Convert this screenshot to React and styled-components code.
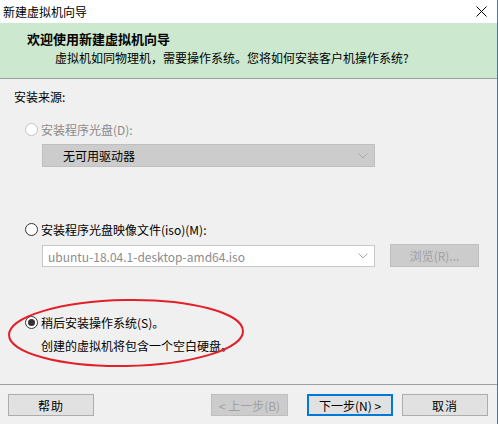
import React from 'react';
import styled, { createGlobalStyle } from 'styled-components';

const GlobalStyle = createGlobalStyle`
  html, body {
    margin: 0;
    padding: 0;
    background: #f0f0f0;
  }
  * {
    box-sizing: border-box;
  }
`;

const Window = styled.div`
  position: relative;
  width: 498px;
  height: 424px;
  display: flex;
  flex-direction: column;
  background: #f0f0f0;
  border-right: 1px solid #2b79d0;
  font-family: "Noto Sans CJK SC", "Microsoft YaHei", sans-serif;
  font-size: 12px;
  color: #000;
  overflow: hidden;
`;

const TitleBar = styled.div`
  height: 23px;
  display: flex;
  align-items: center;
  justify-content: space-between;
  padding: 0 10px 1px 3px;
  background: #fff;
  font-size: 12px;
`;

const Header = styled.div`
  height: 56px;
  background: #cce8cf;
  border-bottom: 1px solid #a0a0a0;
  padding-top: 8px;
`;

const HeaderTitle = styled.div`
  margin-left: 27px;
  font-size: 13px;
  font-weight: bold;
  line-height: 16px;
`;

const HeaderSub = styled.div`
  margin-left: 55px;
  margin-top: 3px;
  line-height: 16px;
`;

const Body = styled.div`
  flex: 1;
  padding: 10px 0 0 14px;
  display: flex;
  flex-direction: column;
`;

const Label = styled.div`
  line-height: 16px;
  margin-top: ${p => p.$top || 0}px;
  margin-left: ${p => p.$left || 0}px;
  color: ${p => (p.$disabled ? '#8a8a8a' : '#000')};
`;

const RadioRow = styled.div`
  display: flex;
  align-items: center;
  gap: 3px;
  height: 16px;
  margin-left: 11px;
  margin-top: ${p => p.$top}px;
  color: ${p => (p.$disabled ? '#8a8a8a' : '#000')};
`;

const RadioDot = styled.span`
  position: relative;
  width: 13px;
  height: 13px;
  border-radius: 50%;
  border: 1px solid ${p => (p.$disabled ? '#c2c2c2' : '#333')};
  background: #fff;

  &::after {
    content: '';
    display: ${p => (p.$checked ? 'block' : 'none')};
    position: absolute;
    left: 2px;
    top: 2px;
    width: 7px;
    height: 7px;
    border-radius: 50%;
    background: #333;
  }
`;

const FieldRow = styled.div`
  display: flex;
  align-items: flex-start;
  gap: 15px;
  margin-left: 28px;
  margin-top: 7px;
`;

const Combo = styled.div`
  width: 333px;
  height: ${p => (p.$disabled ? 23 : 22)}px;
  display: flex;
  align-items: center;
  justify-content: space-between;
  padding: 0 6px 0 ${p => (p.$disabled ? 20 : 5)}px;
  background: ${p => (p.$disabled ? '#cccccc' : '#fff')};
  border: 1px solid ${p => (p.$disabled ? '#bfbfbf' : '#c8c8c8')};
  color: ${p => (p.$disabled ? '#000' : '#8c8c8c')};
  margin-top: ${p => (p.$disabled ? 0 : 1)}px;
`;

const Button = styled.div`
  width: ${p => p.$w || 86}px;
  height: ${p => p.$h || 22}px;
  display: flex;
  align-items: center;
  justify-content: center;
  background: ${p => (p.$disabled ? '#cccccc' : '#e1e1e1')};
  border: ${p => (p.$primary ? '2px solid #0078d7' : p.$disabled ? '1px solid #bfbfbf' : '1px solid #adadad')};
  color: ${p => (p.$disabled ? '#a0a0a0' : '#000')};
  letter-spacing: ${p => p.$spacing || 0}px;
`;

const LaterSection = styled.div`
  display: flex;
  flex-direction: column;
`;

const Footer = styled.div`
  height: 40px;
  border-top: 1px solid #a0a0a0;
  padding: 9px 9px 8px 8px;
  display: flex;
  align-items: flex-start;
`;

const Spacer = styled.div`
  flex: 1;
`;

const FooterGroup = styled.div`
  display: flex;
  gap: ${p => p.$gap}px;
`;

const Ellipse = styled.svg`
  position: absolute;
  left: 7px;
  top: 298px;
  pointer-events: none;
`;

const Chevron = ({ color }) => (
  <svg width="10" height="6" viewBox="0 0 10 6">
    <path d="M0.5 0.5 L5 5 L9.5 0.5" fill="none" stroke={color} strokeWidth="1" />
  </svg>
);

export default function App() {
  return (
    <>
      <GlobalStyle />
      <Window>
        <TitleBar>
          <span>新建虚拟机向导</span>
          <svg width="11" height="11" viewBox="0 0 11 11">
            <path d="M0.5 0.5 L10.5 10.5 M10.5 0.5 L0.5 10.5" stroke="#000" strokeWidth="1" />
          </svg>
        </TitleBar>
        <Header>
          <HeaderTitle>欢迎使用新建虚拟机向导</HeaderTitle>
          <HeaderSub>虚拟机如同物理机，需要操作系统。您将如何安装客户机操作系统?</HeaderSub>
        </Header>
        <Body>
          <Label>安装来源:</Label>

          <RadioRow $top={16} $disabled>
            <RadioDot $disabled />
            <span>安装程序光盘(D):</span>
          </RadioRow>
          <FieldRow>
            <Combo $disabled>
              <span>无可用驱动器</span>
              <Chevron color="#a8a8a8" />
            </Combo>
          </FieldRow>

          <RadioRow $top={54}>
            <RadioDot />
            <span>安装程序光盘映像文件(iso)(M):</span>
          </RadioRow>
          <FieldRow>
            <Combo>
              <span>ubuntu-18.04.1-desktop-amd64.iso</span>
              <Chevron color="#a8a8a8" />
            </Combo>
            <Button $w={89} $h={23} $disabled>浏览(R)...</Button>
          </FieldRow>

          <LaterSection>
            <RadioRow $top={47}>
              <RadioDot $checked />
              <span>稍后安装操作系统(S)。</span>
            </RadioRow>
            <Label $top={8} $left={27}>创建的虚拟机将包含一个空白硬盘。</Label>
          </LaterSection>
        </Body>
        <Footer>
          <Button $spacing={1}>帮助</Button>
          <Spacer />
          <FooterGroup $gap={19}>
            <Button $w={77} $disabled>&lt; 上一步(B)</Button>
            <FooterGroup $gap={9}>
              <Button $primary>下一步(N) &gt;</Button>
              <Button $spacing={1}>取消</Button>
            </FooterGroup>
          </FooterGroup>
        </Footer>
        <Ellipse width="238" height="70" viewBox="0 0 238 70">
          <ellipse cx="119" cy="35" rx="117" ry="33" fill="none" stroke="#e3202a" strokeWidth="2" transform="rotate(-1 119 35)" />
        </Ellipse>
      </Window>
    </>
  );
}
